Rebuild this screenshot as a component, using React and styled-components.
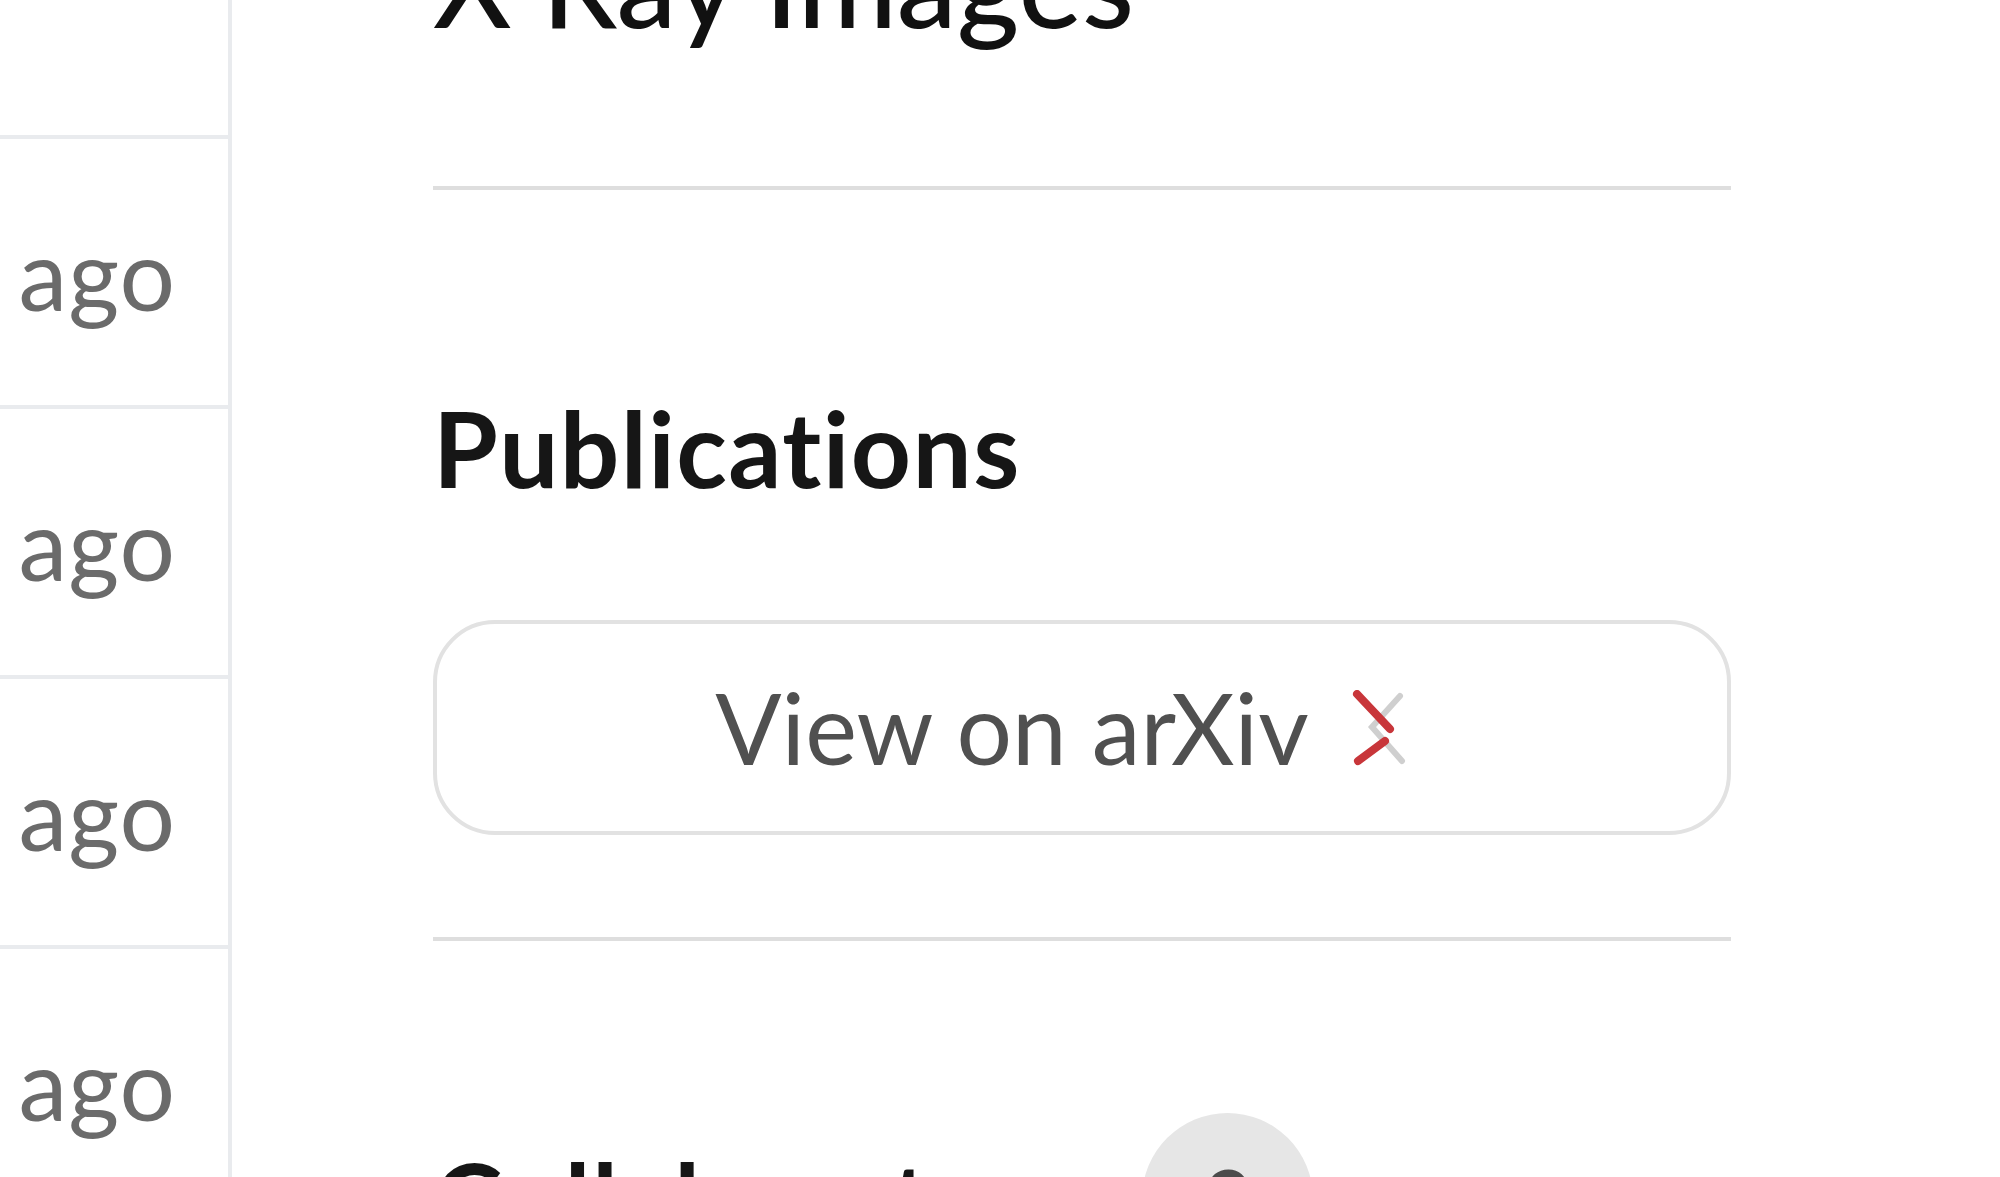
import React from 'react';
import styled, { createGlobalStyle } from 'styled-components';

const GlobalStyle = createGlobalStyle`
    html, body {
        margin: 0;
        padding: 0;
        background: #ffffff;
        overflow: hidden;
    }
    body {
        font-family: Lato, 'Noto Sans', 'Liberation Sans', sans-serif;
        font-variant-ligatures: none;
    }
`;

const Page = styled.div`
    display: flex;
    min-height: 100vh;
`;

// Правая кромка списка (видна только часть строк)
const Sidebar = styled.aside`
    width: 228px;
    flex-shrink: 0;
    border-right: 4px solid #e9ebee;
`;

const SidebarRow = styled.div`
    height: ${({ $height }) => $height}px;
    border-bottom: 4px solid #e9ebee;
    display: flex;
    justify-content: flex-end;
    padding: 76px 52px 0 0;
    box-sizing: content-box;
`;

const TimeAgo = styled.span`
    font-size: 98px;
    line-height: 1.2;
    color: #6b6b6b;
    letter-spacing: 1px;
    white-space: nowrap;
`;

const Main = styled.main`
    width: 1298px;
    margin: -90px 0 0 201px;
`;

const TitleSection = styled.section`
    padding-bottom: 132px;
    border-bottom: 4px solid #dedede;
`;

const Title = styled.h1`
    margin: 0;
    font-size: 120px;
    line-height: 1.2;
    font-weight: 500;
    color: #111111;
    white-space: nowrap;
`;

const Section = styled.section`
    padding: 194px 0 ${({ $bottom }) => $bottom || 0}px;
    border-bottom: ${({ $divider }) => ($divider ? '4px solid #dedede' : 'none')};
`;

const SectionHeader = styled.div`
    display: flex;
    align-items: center;
    gap: 62px;
`;

const SectionTitle = styled.h2`
    margin: 0;
    font-size: 105px;
    line-height: 1.2;
    font-weight: 700;
    letter-spacing: 1.4px;
    color: #161616;
    white-space: nowrap;
`;

const CountBadge = styled.span`
    width: 171px;
    height: 171px;
    margin: -22px 0;
    border-radius: 50%;
    background: #e6e6e6;
    color: #4b4b4b;
    font-size: 84px;
    font-weight: 600;
    display: flex;
    align-items: center;
    justify-content: center;
`;

const ArxivButton = styled.a`
    margin-top: 110px;
    height: 207px;
    border: 4px solid #e2e2e2;
    border-radius: 62px;
    display: flex;
    align-items: center;
    justify-content: center;
    font-size: 98px;
    line-height: 1.2;
    color: #505050;
    text-decoration: none;
`;

const ArxivMark = styled.svg`
    width: 56px;
    height: 76px;
    margin: 0 42px 0 42px;
    flex-shrink: 0;
`;

const ArxivLogo = () => (
    <ArxivMark viewBox="0 0 56 76" fill="none" strokeLinecap="round">
        <path d="M49 6 L21 37 L51 71" stroke="#cfcfcf" strokeWidth="6" />
        <path d="M6 4 L39 39" stroke="#c8363a" strokeWidth="8" />
        <path d="M34 51 L7 71" stroke="#c8363a" strokeWidth="8" />
    </ArxivMark>
);

const rows = [135, 266, 266, 266, 266];

const App = () => (
    <>
        <GlobalStyle />
        <Page>
            <Sidebar>
                {rows.map((h, i) => (
                    <SidebarRow key={i} $height={h - 76}>
                        {i > 0 && <TimeAgo>ago</TimeAgo>}
                    </SidebarRow>
                ))}
            </Sidebar>
            <Main>
                <TitleSection>
                    <Title>X Ray Images</Title>
                </TitleSection>
                <Section $divider $bottom={102}>
                    <SectionTitle>Publications</SectionTitle>
                    <ArxivButton href="#">
                        View on arXiv
                        <ArxivLogo />
                    </ArxivButton>
                </Section>
                <Section>
                    <SectionHeader>
                        <SectionTitle>Collaborators</SectionTitle>
                        <CountBadge>2</CountBadge>
                    </SectionHeader>
                </Section>
            </Main>
        </Page>
    </>
);

export default App;
